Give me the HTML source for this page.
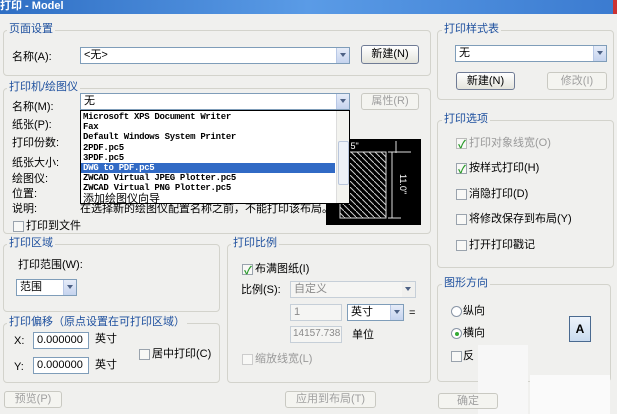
<!DOCTYPE html>
<html><head><meta charset="utf-8"><style>
*{box-sizing:border-box;margin:0;padding:0}
body{width:617px;height:414px;overflow:hidden;background:#f0f0ee;font-family:"Liberation Sans","Noto Sans CJK SC",sans-serif;font-size:11px;color:#000;position:relative}
.a{position:absolute;white-space:nowrap;line-height:12px}
.title{position:absolute;left:0;top:0;width:617px;height:14px;background:linear-gradient(90deg,#2f6fc4,#5a9be6 50%,#3b7bd0);color:#fff;font-weight:bold;font-size:11px;line-height:13px;padding-left:0}
.grp{position:absolute;border:1px solid #d3d3cc;border-radius:4px}
.gl{position:absolute;color:#1d4f9e;background:#f0f0ee;padding:0 2px;line-height:12px;font-size:11px}
.in{position:absolute;background:#fff;border:1px solid #7f9db9;line-height:14px;padding-left:3px}
.dis{background:#f5f5f3;border-color:#c6cfd8;color:#8a8a8a}
.arr{position:absolute;right:0;top:0;width:13px;height:100%;background:linear-gradient(#e6ecf8,#c5d3ee);border-left:1px solid #b8c8e6}
.arr:after{content:"";position:absolute;left:3px;top:5px;border:3px solid transparent;border-top:4px solid #4d6185}
.btn{position:absolute;border:1px solid #6f7b95;border-radius:3px;background:linear-gradient(#fff,#e4e4dc);text-align:center;line-height:16px}
.bd{border-color:#c9c9c2;color:#a0a0a0;background:#f4f4f0}
.cb{position:absolute;width:11px;height:11px;border:1px solid #9aa3ad;background:#f8f8f6}
.ck:after{content:"✓";position:absolute;left:1px;top:-3px;color:#2a9a2a;font-size:11px;font-weight:bold}
.rb{position:absolute;width:11px;height:11px;border:1px solid #8a96a6;border-radius:50%;background:#fff}
.list{position:absolute;left:80px;top:110px;width:270px;height:94px;background:#fff;border:1px solid #000;font-family:"Liberation Mono","Noto Sans CJK SC",monospace;font-size:9px;font-weight:bold;padding-top:1px}
.list div{height:10.2px;line-height:10px;padding-left:2px;letter-spacing:-0.3px}
.gray{color:#999}
</style></head><body>
<div class="title">打印 - Model</div>
<div style="position:absolute;right:0;top:0;width:4px;height:14px;background:#c33"></div>

<div class="grp" style="left:3px;top:30px;width:428px;height:46px"></div>
<div class="gl" style="left:7px;top:23px">页面设置</div>
<div class="a" style="left:12px;top:51px">名称(A):</div>
<div class="in" style="left:80px;top:47px;width:270px;height:17px">&lt;无&gt;<div class="arr"></div></div>
<div class="btn" style="left:361px;top:45px;width:58px;height:19px">新建(N)</div>

<div class="grp" style="left:3px;top:88px;width:428px;height:146px"></div>
<div class="gl" style="left:7px;top:81px">打印机/绘图仪</div>
<div class="a" style="left:12px;top:101px">名称(M):</div>
<div class="in" style="left:80px;top:93px;width:270px;height:17px">无<div class="arr"></div></div>
<div class="btn bd" style="left:361px;top:93px;width:58px;height:17px;line-height:15px">属性(R)</div>
<div class="a" style="left:12px;top:119px">纸张(P):</div>
<div class="a" style="left:12px;top:137px">打印份数:</div>
<div class="a" style="left:12px;top:157px">纸张大小:</div>
<div class="a" style="left:12px;top:173px">绘图仪:</div>
<div class="a" style="left:12px;top:188px">位置:</div>
<div class="a" style="left:12px;top:203px">说明:</div>
<div class="a" style="left:80px;top:203px">在选择新的绘图仪配置名称之前，不能打印该布局。</div>
<div style="position:absolute;left:326px;top:139px;width:95px;height:86px;background:#000">
<svg width="95" height="86" style="position:absolute;left:0;top:0">
<defs><pattern id="h" width="6" height="6" patternUnits="userSpaceOnUse"><path d="M0,0L6,6" stroke="#ccc" stroke-width="1"/></pattern></defs>
<rect x="14" y="13" width="46" height="66" fill="url(#h)" stroke="#ddd"/>
<text x="17" y="10" fill="#fff" font-size="9" font-family="Liberation Sans">8.5"</text>
<path d="M70,2V14M62,13H85M66,13V79M62,79H75" stroke="#ddd" fill="none"/>
<text x="74" y="35" fill="#fff" font-size="9" font-family="Liberation Sans" transform="rotate(90 74 35)">11.0"</text>
</svg></div>
<div class="list">
<div>Microsoft XPS Document Writer</div><div>Fax</div><div>Default Windows System Printer</div><div>2PDF.pc5</div><div>3PDF.pc5</div>
<div style="background:#316ac5;color:#fff;margin-right:14px">DWG to PDF.pc5</div>
<div>ZWCAD Virtual JPEG Plotter.pc5</div><div>ZWCAD Virtual PNG Plotter.pc5</div>
<div style="font-family:'Liberation Sans','Noto Sans CJK SC',sans-serif;font-weight:normal;font-size:11px;letter-spacing:0">添加绘图仪向导</div>
<div style="position:absolute;right:0;top:0;width:13px;height:92px;background:#f3f3ef;border-left:1px solid #ddd;padding:0"><div style="position:absolute;left:1px;top:30px;width:11px;height:44px;border:1px solid #b9c6dc;border-radius:2px;background:#eef2f8"></div></div>
</div>
<div class="cb" style="left:13px;top:221px"></div>
<div class="a" style="left:26px;top:220px">打印到文件</div>

<div class="grp" style="left:3px;top:244px;width:217px;height:68px"></div>
<div class="gl" style="left:7px;top:237px">打印区域</div>
<div class="a" style="left:18px;top:259px">打印范围(W):</div>
<div class="in" style="left:16px;top:279px;width:61px;height:17px">范围<div class="arr"></div></div>

<div class="grp" style="left:3px;top:323px;width:217px;height:60px"></div>
<div class="gl" style="left:7px;top:316px">打印偏移（原点设置在可打印区域）</div>
<div class="a" style="left:14px;top:335px">X:</div>
<div class="in" style="left:33px;top:332px;width:56px;height:17px">0.000000</div>
<div class="a" style="left:95px;top:333px">英寸</div>
<div class="a" style="left:14px;top:361px">Y:</div>
<div class="in" style="left:33px;top:357px;width:56px;height:17px">0.000000</div>
<div class="a" style="left:95px;top:359px">英寸</div>
<div class="cb" style="left:139px;top:349px"></div>
<div class="a" style="left:152px;top:348px">居中打印(C)</div>

<div class="grp" style="left:227px;top:244px;width:204px;height:139px"></div>
<div class="gl" style="left:231px;top:237px">打印比例</div>
<div class="cb ck" style="left:242px;top:264px"></div>
<div class="a" style="left:255px;top:263px">布满图纸(I)</div>
<div class="a" style="left:241px;top:284px">比例(S):</div>
<div class="in dis" style="left:290px;top:281px;width:126px;height:17px">自定义<div class="arr" style="background:#f0f0ee;border:none"></div></div>
<div class="in dis" style="left:290px;top:304px;width:52px;height:17px">1</div>
<div class="in" style="left:347px;top:304px;width:57px;height:17px">英寸<div class="arr"></div></div>
<div class="a" style="left:409px;top:307px">=</div>
<div class="in dis" style="left:290px;top:326px;width:52px;height:17px;font-size:10px;padding-left:2px">14157.738</div>
<div class="a" style="left:352px;top:329px">单位</div>
<div class="cb" style="left:242px;top:354px;border-color:#ccc"></div>
<div class="a gray" style="left:255px;top:353px">缩放线宽(L)</div>

<div class="btn bd" style="left:4px;top:391px;width:58px;height:17px;line-height:15px">预览(P)</div>
<div class="btn bd" style="left:285px;top:391px;width:91px;height:17px;line-height:15px">应用到布局(T)</div>

<div class="grp" style="left:437px;top:30px;width:177px;height:70px"></div>
<div class="gl" style="left:442px;top:23px">打印样式表</div>
<div class="in" style="left:455px;top:45px;width:152px;height:17px">无<div class="arr"></div></div>
<div class="btn" style="left:456px;top:72px;width:59px;height:18px">新建(N)</div>
<div class="btn bd" style="left:547px;top:72px;width:60px;height:18px">修改(I)</div>

<div class="grp" style="left:437px;top:120px;width:177px;height:148px"></div>
<div class="gl" style="left:442px;top:113px">打印选项</div>
<div class="cb ck" style="left:456px;top:138px;border-color:#bbb"></div><div class="a gray" style="left:469px;top:137px">打印对象线宽(O)</div>
<div class="cb ck" style="left:456px;top:163px"></div><div class="a" style="left:469px;top:162px">按样式打印(H)</div>
<div class="cb" style="left:456px;top:189px"></div><div class="a" style="left:469px;top:188px">消隐打印(D)</div>
<div class="cb" style="left:456px;top:214px"></div><div class="a" style="left:469px;top:213px">将修改保存到布局(Y)</div>
<div class="cb" style="left:456px;top:240px"></div><div class="a" style="left:469px;top:239px">打开打印戳记</div>

<div class="grp" style="left:437px;top:284px;width:174px;height:98px"></div>
<div class="gl" style="left:442px;top:277px">图形方向</div>
<div class="rb" style="left:451px;top:306px"></div><div class="a" style="left:463px;top:305px">纵向</div>
<div class="rb" style="left:451px;top:328px"></div><div style="position:absolute;left:455px;top:332px;width:4px;height:4px;border-radius:50%;background:#3a3"></div><div class="a" style="left:463px;top:327px">横向</div>
<div class="cb" style="left:451px;top:351px"></div><div class="a" style="left:463px;top:350px">反</div>
<div style="position:absolute;left:569px;top:316px;width:22px;height:26px;background:linear-gradient(#eef4fb,#c9dbef);border:1px solid #4a6a90;font-weight:bold;text-align:center;line-height:24px;font-size:12px">A</div>
<div style="position:absolute;left:478px;top:345px;width:50px;height:69px;background:#f7f7f7"></div>
<div style="position:absolute;left:530px;top:375px;width:80px;height:39px;background:#fafafa"></div>

<div class="btn bd" style="left:438px;top:393px;width:60px;height:16px;line-height:14px">确定</div>
</body></html>
